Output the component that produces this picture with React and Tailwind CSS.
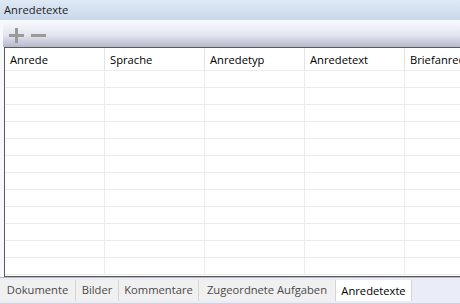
import React from "react";

const cols = ["Anrede", "Sprache", "Anredetyp", "Anredetext", "Briefanrede"];
const rows = Array.from({ length: 12 });
const tabs = [
  ["Dokumente", "w-[76px]"],
  ["Bilder", "w-[43px]"],
  ["Kommentare", "w-[80px]"],
  ["Zugeordnete Aufgaben", "w-[137px]"],
];

export default function App() {
  return (
    <div
      className="w-[460px] h-[304px] bg-white flex flex-col overflow-hidden text-[11.2px]"
      style={{ fontFamily: '"Open Sans", "Noto Sans", sans-serif' }}
    >
      <div className="h-[20px] shrink-0 bg-gradient-to-b from-[#dfe9f5] to-[#c9d8ea] px-[4px] leading-[20px] text-[#1e1e1e]">
        Anredetexte
      </div>
      <div className="flex flex-col bg-[#f7f8fb] pl-[3px] pt-[3px]">
        <div className="h-[24px] shrink-0 bg-gradient-to-b from-[#f6f7fc] via-[#e3e5ef] to-[#b6b9cc] flex items-center pl-[6px] gap-[7px]">
          <svg width="15" height="15" viewBox="0 0 15 15">
            <rect x="0" y="6" width="15" height="3" fill="#9a9a9a" />
            <rect x="6" y="0" width="3" height="15" fill="#9a9a9a" />
          </svg>
          <svg width="15" height="15" viewBox="0 0 15 15">
            <rect x="0" y="6" width="15" height="3" fill="#9a9a9a" />
          </svg>
        </div>
        <div className="h-[230px] shrink-0 bg-white border-l border-t border-b border-[#5a5a5a] ml-[1px] overflow-hidden">
          <div className="flex h-[23px] border-b border-[#ededed]">
            {cols.map((c) => (
              <div
                key={c}
                className="w-[100px] shrink-0 border-r border-[#e3e3e3] pl-[5px] pt-[4px] text-black whitespace-nowrap overflow-hidden"
              >
                {c}
              </div>
            ))}
          </div>
          {rows.map((_, i) => (
            <div key={i} className="flex h-[17px] border-b border-[#ececec]">
              {cols.map((c) => (
                <div key={c} className="w-[100px] shrink-0 border-r border-[#ececec]" />
              ))}
            </div>
          ))}
        </div>
      </div>
      <div className="h-[1px] bg-[#b8b8c0] shrink-0" />
      <div className="flex-1 bg-[#eaecf8] flex items-start pt-[2px] border-b border-[#d2d2da]">
        {tabs.map(([t, w]) => (
          <div
            key={t}
            className={`${w} h-[21px] text-center leading-[20px] bg-[#f0f0f0] border-r border-[#d4d4d4] text-[#4a4a4a] whitespace-nowrap`}
          >
            {t}
          </div>
        ))}
        <div className="w-[76px] h-[21px] text-center leading-[21px] bg-white border-r border-[#d4d4d4] text-black whitespace-nowrap">
          Anredetexte
        </div>
      </div>
    </div>
  );
}
